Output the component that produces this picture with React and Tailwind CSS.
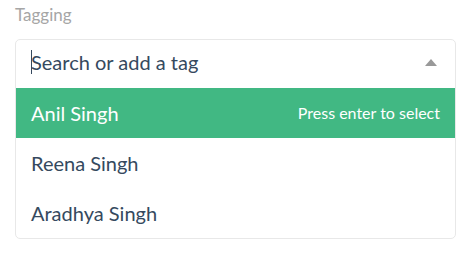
export default function App() {
  const options = ['Reena Singh', 'Aradhya Singh'];
  return (
    <div className="w-[474px] h-[262px] bg-white px-[15px] pt-[3px]" style={{ fontFamily: 'Lato, "Open Sans", sans-serif' }}>
      <label className="block text-[17px] leading-[24px] text-[#a6a6a6] mb-[12px]">Tagging</label>
      <div className="w-[441px] border border-[#e8e8e8] rounded-[5px] overflow-hidden">
        {/* input */}
        <div className="h-[48px] flex items-center pl-[15px] pr-[18px] pb-[4px]">
          <div className="flex-1 flex items-center text-[20px] text-[#35495e]">
            <span className="w-[1px] h-[24px] bg-[#35495e] mr-[-1px]" />
            <span>Search or add a tag</span>
          </div>
          <svg width="12" height="7" viewBox="0 0 12 7" className="mt-[1px]">
            <polygon points="6,0 12,7 0,7" fill="#999" />
          </svg>
        </div>
        {/* highlighted */}
        <div className="h-[50px] flex items-center justify-between bg-[#41b883] text-white pl-[15px] pr-[15px]">
          <span className="text-[20px]">Anil Singh</span>
          <span className="text-[16px]">Press enter to select</span>
        </div>
        {options.map((o) => (
          <div key={o} className="h-[50px] flex items-center pl-[15px] text-[20px] text-[#35495e]">
            {o}
          </div>
        ))}
      </div>
    </div>
  );
}
